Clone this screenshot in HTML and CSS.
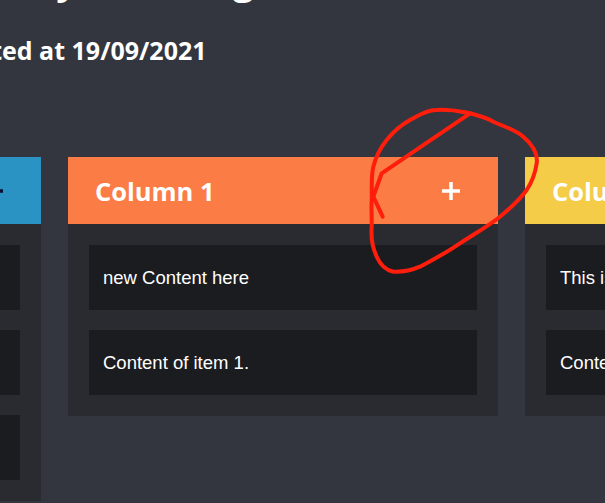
FILE: index.html
```html
<!DOCTYPE html>
<html lang="en">
<head>
<meta charset="utf-8">
<title>Kanban Board</title>
<link rel="stylesheet" href="styles.css">
</head>
<body>
<div class="page">
  <header class="intro">
    <h1 class="title">Daily Planning</h1>
    <p class="created">Created at 19/09/2021</p>
  </header>
  <main class="board">
    <section class="column">
      <div class="column-head head-blue">
        <h2 class="column-title">Column 0</h2>
        <button class="add add-dark" aria-label="Add item">
          <svg viewBox="0 0 20 20" width="20" height="20"><path d="M10 1v18M1 10h18" stroke="currentColor" stroke-width="3.5"/></svg>
        </button>
      </div>
      <div class="column-body">
        <div class="card">Content of item 2.</div>
        <div class="card">Content of item 3.</div>
        <div class="card">Content of item 4.</div>
      </div>
    </section>
    <section class="column">
      <div class="column-head head-orange">
        <h2 class="column-title">Column 1</h2>
        <button class="add" aria-label="Add item">
          <svg viewBox="0 0 20 20" width="20" height="20"><path d="M10 1v18M1 10h18" stroke="currentColor" stroke-width="3.5"/></svg>
        </button>
      </div>
      <div class="column-body">
        <div class="card">new Content here</div>
        <div class="card">Content of item 1.</div>
      </div>
    </section>
    <section class="column">
      <div class="column-head head-yellow">
        <h2 class="column-title">Column 2</h2>
        <button class="add" aria-label="Add item">
          <svg viewBox="0 0 20 20" width="20" height="20"><path d="M10 1v18M1 10h18" stroke="currentColor" stroke-width="3.5"/></svg>
        </button>
      </div>
      <div class="column-body">
        <div class="card">This is a new item.</div>
        <div class="card">Content of item 5.</div>
      </div>
    </section>
  </main>
</div>
<svg class="annotation" width="605" height="503" viewBox="0 0 605 503" aria-hidden="true">
  <path d="M436.7 110 C452 109 462 112 470 113.3 C480 116 487 118 493.3 121.7 C505 127 516 130 523.3 136.7 C533 145 538 154 536.7 163.3 C535 175 532 182 526.7 190 C518 202 509 209 500 216.7 C487 227 474 234 460 243.3 C447 252 433 260 420 266.7 C410 271 401 272 393.3 271.7 C385 270 380 264 376.7 256.7 C372 247 371 236 371.7 226.7 C372 217 371 208 371.7 200 C372 188 371 176 373.3 166.7 C376 156 381 147 386.7 140 C393 132 401 125 410 120 C419 115 428 110 436.7 110 Z" fill="none" stroke="#ff1d0c" stroke-width="4" stroke-linejoin="round"/>
  <path d="M470 113.3 L381.7 173.3 L373.3 196.7 L382.7 216.7" fill="none" stroke="#ff1d0c" stroke-width="4" stroke-linecap="round" stroke-linejoin="round"/>
</svg>
</body>
</html>
```

FILE: styles.css
```css
html, body {
  margin: 0;
  padding: 0;
}

body {
  background: #33363e;
  width: 605px;
  height: 503px;
  overflow: hidden;
  position: relative;
  font-family: "Open Sans", "Noto Sans", sans-serif;
  color: #ffffff;
}

.page {
  margin-left: -389px;
  margin-top: -40px;
  width: 1500px;
}

.intro {
  padding-left: 323px;
}

.title {
  margin: 0 0 0 48px;
  height: 40px;
  font-size: 38px;
  line-height: 38px;
  font-weight: 700;
  white-space: nowrap;
}

.created {
  margin: 0;
  padding-top: 34px;
  font-size: 25px;
  line-height: 32px;
  font-weight: 700;
  white-space: nowrap;
}

.board {
  display: flex;
  align-items: flex-start;
  gap: 27px;
  margin-top: 91px;
}

.column {
  width: 430px;
  flex: none;
  display: flex;
  flex-direction: column;
}

.column-head {
  height: 67px;
  display: flex;
  align-items: center;
  justify-content: space-between;
  padding: 0 37px 0 27px;
}

.head-blue { background: #2a93c4; }
.head-orange { background: #fc7c46; }
.head-yellow { background: #f4cc48; }

.column-title {
  margin: 0;
  font-size: 25.5px;
  font-weight: 700;
  line-height: 32px;
  white-space: nowrap;
}

.add {
  background: none;
  border: 0;
  padding: 0;
  margin: 0;
  color: #ffffff;
  display: flex;
  cursor: pointer;
}

.add-dark {
  color: #0b0f35;
}

.column-body {
  background: #2a2b30;
  padding: 21px;
  display: flex;
  flex-direction: column;
  gap: 20px;
}

.card {
  background: #1b1c20;
  height: 65px;
  padding: 0 14px;
  display: flex;
  align-items: center;
  font-family: "Liberation Sans", Arial, sans-serif;
  font-size: 18.5px;
  color: #ffffff;
  white-space: nowrap;
}

.annotation {
  position: absolute;
  left: 0;
  top: 0;
  pointer-events: none;
}
```
